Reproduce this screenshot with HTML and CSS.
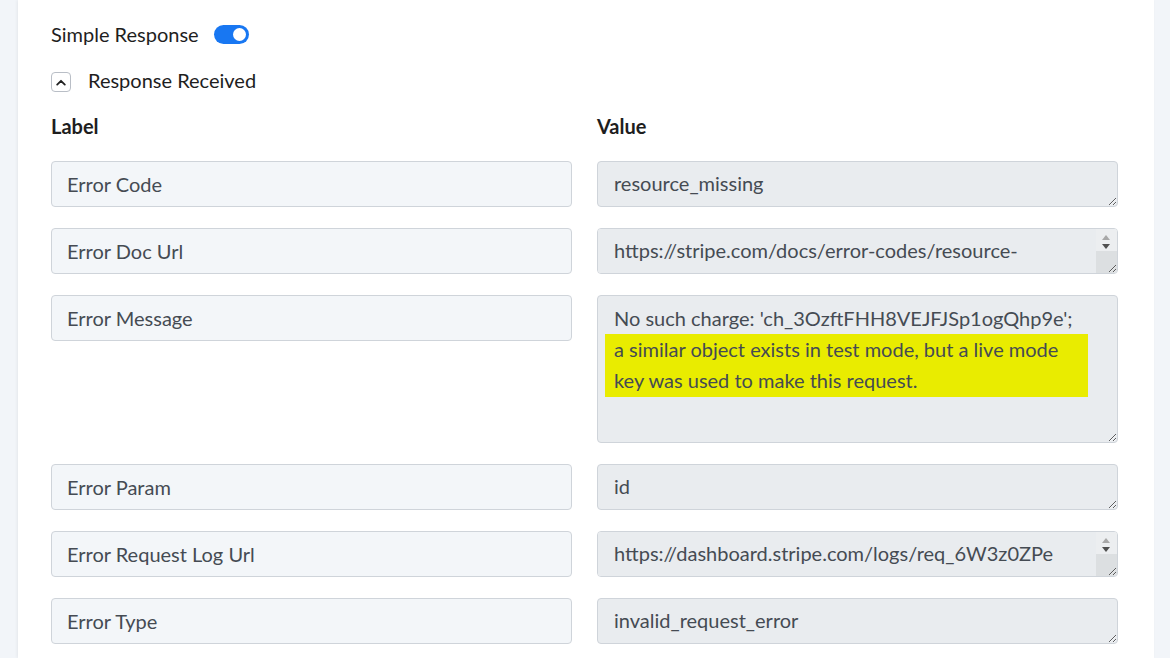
FILE: index.html
```html
<!DOCTYPE html>
<html lang="en">
<head>
<meta charset="utf-8">
<title>Response Received</title>
<link rel="stylesheet" href="styles.css">
</head>
<body>
<div class="page">
  <main class="card">
    <div class="toggle-row">
      <span class="toggle-label">Simple Response</span>
      <span class="switch"><span class="knob"></span></span>
    </div>
    <div class="section-row">
      <span class="collapse-btn">
        <svg width="10" height="7" viewBox="0 0 10 7"><path d="M1.2 5.6 L5 1.8 L8.8 5.6" fill="none" stroke="#222" stroke-width="1.8" stroke-linecap="round" stroke-linejoin="round"/></svg>
      </span>
      <span class="section-title">Response Received</span>
    </div>
    <div class="grid">
      <div class="col-head">Label</div>
      <div class="col-head">Value</div>

      <input class="label-field" type="text" value="Error Code" readonly>
      <textarea class="value-field" readonly>resource_missing</textarea>

      <input class="label-field" type="text" value="Error Doc Url" readonly>
      <div class="field-wrap">
        <textarea class="value-field" readonly>https://stripe.com/docs/error-codes/resource-missing</textarea>
        <span class="spin"><span class="spin-btns"><i class="up"></i><i class="down"></i></span><span class="spin-corner"></span></span>
      </div>

      <input class="label-field" type="text" value="Error Message" readonly>
      <div class="value-field message">
        <div class="msg-line">No such charge: 'ch_3OzftFHH8VEJFJSp1ogQhp9e';</div>
        <div class="mark">
          <div class="msg-line">a similar object exists in test mode, but a live mode</div>
          <div class="msg-line">key was used to make this request.</div>
        </div>
      </div>

      <input class="label-field" type="text" value="Error Param" readonly>
      <textarea class="value-field" readonly>id</textarea>

      <input class="label-field" type="text" value="Error Request Log Url" readonly>
      <div class="field-wrap">
        <textarea class="value-field" readonly>https://dashboard.stripe.com/logs/req_6W3z0ZPe
XyQk1aLm8Rt</textarea>
        <span class="spin"><span class="spin-btns"><i class="up"></i><i class="down"></i></span><span class="spin-corner"></span></span>
      </div>

      <input class="label-field" type="text" value="Error Type" readonly>
      <textarea class="value-field" readonly>invalid_request_error</textarea>
    </div>
  </main>
</div>
</body>
</html>
```
FILE: styles.css
```css
html, body {
  margin: 0;
  padding: 0;
  background: #f2f5f9;
  font-family: Lato, "Open Sans", sans-serif;
  overflow: hidden;
}

.page {
  height: 658px;
  display: flex;
}

.card {
  margin-left: 18px;
  width: 1136px;
  box-sizing: border-box;
  background: #ffffff;
  box-shadow: -1px 0 3px rgba(0, 0, 0, 0.06);
  padding: 22px 36px 0 33px;
}

.toggle-row {
  height: 24px;
  display: flex;
  align-items: center;
  gap: 15px;
}

.toggle-label,
.section-title {
  font-size: 20px;
  color: #1e1e1e;
}

.switch {
  width: 35px;
  height: 19px;
  border-radius: 10px;
  background: #1877f2;
  position: relative;
}

.knob {
  position: absolute;
  top: 3px;
  right: 3px;
  width: 13px;
  height: 13px;
  border-radius: 50%;
  background: #ffffff;
}

.section-row {
  margin-top: 22px;
  height: 24px;
  display: flex;
  align-items: center;
  gap: 17px;
}

.collapse-btn {
  width: 18px;
  height: 18px;
  border: 1px solid #b9bec6;
  border-radius: 4px;
  display: flex;
  align-items: center;
  justify-content: center;
  margin-top: 4px;
}

.grid {
  margin-top: 22px;
  display: grid;
  grid-template-columns: 521px 521px;
  column-gap: 25px;
  row-gap: 21px;
  align-items: start;
}

.col-head {
  font-size: 20px;
  font-weight: 700;
  color: #1e1e1e;
  height: 24px;
  line-height: 24px;
  margin-bottom: 2px;
}

.label-field,
.value-field {
  box-sizing: border-box;
  width: 521px;
  height: 46px;
  margin: 0;
  border: 1px solid #cfd4da;
  border-radius: 4px;
  font-family: Lato, "Open Sans", sans-serif;
  font-size: 20px;
  color: #454b53;
  outline: none;
}

.label-field {
  background: #f3f6f9;
  padding: 0 15px;
}

.value-field {
  background: #e9ecef;
  padding: 6px 40px 0 16px;
  line-height: 31px;
  resize: vertical;
  display: block;
}

/* scroll buttons of an overflowing field */
.field-wrap {
  position: relative;
  width: 521px;
  height: 46px;
}

.spin {
  position: absolute;
  top: 1px;
  right: 1px;
  width: 21px;
  height: 44px;
  display: flex;
  flex-direction: column;
  pointer-events: none;
  border-top-right-radius: 3px;
  border-bottom-right-radius: 3px;
  overflow: hidden;
}

.spin-btns {
  height: 22px;
  background: #eceef0;
  position: relative;
}

.spin-btns i {
  position: absolute;
  left: 6px;
  width: 0;
  height: 0;
  border-left: 4.5px solid transparent;
  border-right: 4.5px solid transparent;
}

.spin-btns .up {
  top: 6px;
  border-bottom: 5px solid #a8a8a8;
}

.spin-btns .down {
  top: 15px;
  border-top: 5px solid #505050;
}

.spin-corner {
  height: 22px;
  background: rgba(0, 0, 0, 0.055);
}

.message {
  height: 148px;
  overflow: auto;
  resize: both;
  padding: 7px 15px 0 16px;
}

.mark {
  background: #e9ec00;
  margin-left: -9px;
  padding-left: 9px;
  width: 474px;
  padding-bottom: 1px;
}
```
